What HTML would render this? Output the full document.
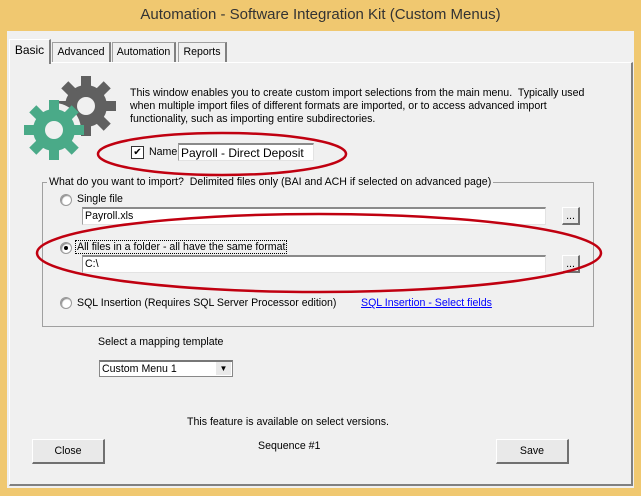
<!DOCTYPE html><html><head><style>
*{margin:0;padding:0;box-sizing:border-box}
body{width:641px;height:496px;background:#f0c870;font-family:"Liberation Sans",sans-serif;font-size:10.6px;color:#000;position:relative;overflow:hidden}
.a{position:absolute;white-space:nowrap}
.inp{position:absolute;background:#fff;border:1px solid #e3e3e3;border-top:2px solid #8a8a8a;border-left:1px solid #a0a0a0;padding:1px 2px;font-size:10.6px}
.btn{position:absolute;background:#e9e9e9;border:1px solid #fff;border-right:2px solid #707070;border-bottom:2px solid #707070;text-align:center;font-size:10.6px}
.tab{position:absolute;border:1px solid #a0a0a0;border-bottom:none;background:#f0f0f0;border-right:2px solid #808080;text-align:center;padding-top:3px}
.rad{position:absolute;width:12px;height:12px;border-radius:50%;background:#fff;border:1px solid #999;box-shadow:inset 1px 1px 1px #888}
</style></head><body>
<div class="a" style="left:0;top:6px;width:641px;text-align:center;font-size:15px;color:#333">Automation - Software Integration Kit (Custom Menus)</div>
<div class="a" style="left:7px;top:31px;width:627px;height:457px;background:#f0f0f0"></div>
<div class="a" style="left:9px;top:62px;width:624px;height:424px;border:1px solid #fff;border-right:2px solid #808080;border-bottom:2px solid #808080"></div>
<div class="tab" style="left:9px;top:39px;width:42px;height:25px;border-right:2px solid #808080;border-left:1px solid #fff;border-top:1px solid #fff;font-size:12px">Basic</div>
<div class="tab" style="left:52px;top:42px;width:59px;height:20px">Advanced</div>
<div class="tab" style="left:112px;top:42px;width:64px;height:20px">Automation</div>
<div class="tab" style="left:178px;top:42px;width:49px;height:20px">Reports</div>
<svg class="a" style="left:22px;top:74px" width="100" height="95" viewBox="0 0 100 95">
<defs><rect id="t" x="-5" y="-30" width="10" height="12"/></defs>
<g fill="#606060" transform="translate(64,32)"><circle r="21"/>
<use href="#t"/><use href="#t" transform="rotate(45)"/><use href="#t" transform="rotate(90)"/><use href="#t" transform="rotate(135)"/><use href="#t" transform="rotate(180)"/><use href="#t" transform="rotate(225)"/><use href="#t" transform="rotate(270)"/><use href="#t" transform="rotate(315)"/>
<circle r="9" fill="#f0f0f0"/></g>
<g transform="translate(32,56)"><circle r="27" fill="#f0f0f0"/></g>
<g fill="#4aaa88" transform="translate(32,56)"><circle r="21"/>
<use href="#t"/><use href="#t" transform="rotate(45)"/><use href="#t" transform="rotate(90)"/><use href="#t" transform="rotate(135)"/><use href="#t" transform="rotate(180)"/><use href="#t" transform="rotate(225)"/><use href="#t" transform="rotate(270)"/><use href="#t" transform="rotate(315)"/>
<circle r="9" fill="#f0f0f0"/></g></svg>
<div class="a" style="left:130px;top:87px;line-height:13px">This window enables you to create custom import selections from the main menu.&nbsp; Typically used<br>when multiple import files of different formats are imported, or to access advanced import<br>functionality, such as importing entire subdirectories.</div>
<div class="a" style="left:131px;top:146px;width:13px;height:13px;border:1px solid #333;background:#fff;font-size:10px;line-height:11px;text-align:center">✔</div>
<div class="a" style="left:149px;top:146px">Name</div>
<div class="inp" style="left:178px;top:143px;width:136px;height:18px;font-size:12px">Payroll - Direct Deposit</div>
<div class="a" style="left:42px;top:182px;width:552px;height:145px;border:1px solid #a0a0a0"></div>
<div class="a" style="left:47px;top:176px;background:#f0f0f0;padding:0 2px">What do you want to import?&nbsp; Delimited files only (BAI and ACH if selected on advanced page)</div>
<div class="rad" style="left:60px;top:194px"></div>
<div class="a" style="left:77px;top:193px">Single file</div>
<div class="inp" style="left:82px;top:207px;width:464px;height:18px">Payroll.xls</div>
<div class="btn" style="left:562px;top:207px;width:18px;height:18px;line-height:16px">...</div>
<div class="rad" style="left:60px;top:242px"></div><div class="a" style="left:64px;top:246px;width:4px;height:4px;background:#000;border-radius:50%"></div>
<div class="a" style="left:75px;top:240px;border:1px dotted #000;padding:0 1px">All files in a folder - all have the same format</div>
<div class="inp" style="left:82px;top:255px;width:464px;height:18px">C:\</div>
<div class="btn" style="left:562px;top:255px;width:18px;height:18px;line-height:16px">...</div>
<div class="rad" style="left:60px;top:297px"></div>
<div class="a" style="left:77px;top:297px">SQL Insertion (Requires SQL Server Processor edition)</div>
<div class="a" style="left:361px;top:297px;color:#00f;text-decoration:underline">SQL Insertion - Select fields</div>
<div class="a" style="left:98px;top:336px">Select a mapping template</div>
<div class="a" style="left:99px;top:360px;width:134px;height:17px;background:#fff;border:1px solid #888;border-top:2px solid #777;padding:1px 2px">Custom Menu 1</div>
<div class="a" style="left:216px;top:362px;width:15px;height:13px;background:#e9e9e9;font-size:8px;text-align:center;line-height:13px">▼</div>
<div class="a" style="left:187px;top:416px">This feature is available on select versions.</div>
<div class="btn" style="left:32px;top:439px;width:73px;height:25px;line-height:23px">Close</div>
<div class="a" style="left:258px;top:440px">Sequence #1</div>
<div class="btn" style="left:496px;top:439px;width:73px;height:25px;line-height:23px">Save</div>
<svg class="a" style="left:0;top:0" width="641" height="496">
<ellipse cx="222" cy="154" rx="124" ry="21" fill="none" stroke="#c00010" stroke-width="2.5"/>
<ellipse cx="319" cy="253" rx="282" ry="39" fill="none" stroke="#c00010" stroke-width="2.5"/>
</svg>
</body></html>
